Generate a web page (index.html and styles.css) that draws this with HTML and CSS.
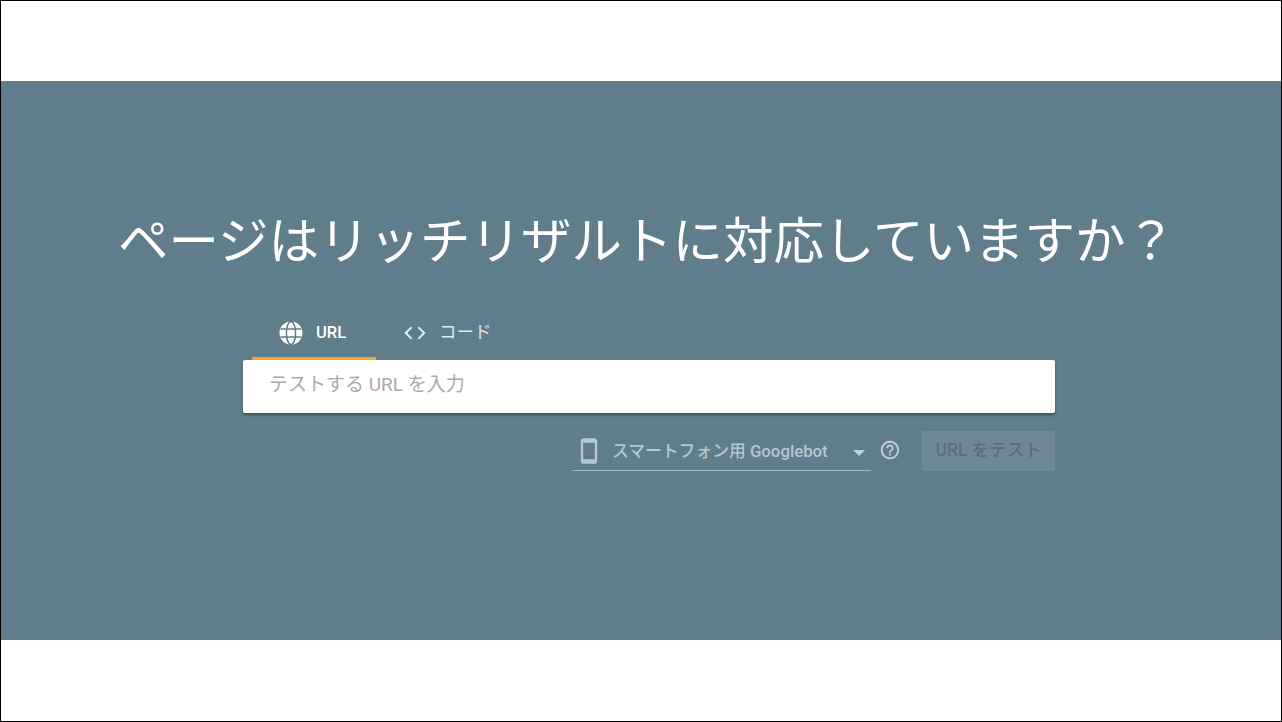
FILE: index.html
```html
<!DOCTYPE html>
<html lang="ja">
  <head>
    <meta charset="UTF-8" />
    <meta name="viewport" content="width=device-width, initial-scale=1.0" />
    <title>リッチリザルト テスト</title>
    <link rel="stylesheet" href="styles.css">
  </head>
  <body>
    <div class="frame">
      <main class="hero">
        <h1 class="title">ページはリッチリザルトに対応していますか？</h1>
        <div class="test-form">
          <div class="tabs">
            <div class="tab tab-active">
              <svg class="tab-icon" viewBox="0 0 24 24">
                <circle cx="12" cy="12" r="11.5" fill="#fff"/>
                <g fill="none" stroke="#607d8b" stroke-width="1.5">
                  <ellipse cx="12" cy="12" rx="4.6" ry="11.5"/>
                  <path d="M1.5 8h21M1.5 16h21"/>
                </g>
              </svg>
              <span>URL</span>
            </div>
            <div class="tab tab-code">
              <svg class="tab-icon" viewBox="0 0 24 24">
                <path fill="#e6ebed" d="M9.4 17.2 4.2 12l5.2-5.2L8 5.4 1.4 12 8 18.6l1.4-1.4zm5.2 0 5.2-5.2-5.2-5.2L16 5.4l6.6 6.6-6.6 6.6-1.4-1.4z"/>
              </svg>
              <span class="code-label">コード</span>
            </div>
          </div>
          <div class="url-input">テストする URL を入力</div>
          <div class="actions">
            <div class="agent-select">
              <svg class="phone-icon" viewBox="0 0 24 24">
                <path fill="#b8c7ce" d="M16.5 1h-9C5.84 1 5 1.9 5 3.5v17C5 22.1 5.84 23 7.5 23h9c1.66 0 2.5-.9 2.5-2.5v-17C19 1.9 18.16 1 16.5 1zM17 19H7V5h10v14z"/>
              </svg>
              <span class="agent-name">スマートフォン用 Googlebot</span>
              <span class="caret"></span>
            </div>
            <svg class="help-icon" viewBox="0 0 24 24">
              <path fill="#c5d1d7" d="M11 18h2v-2h-2v2zm1-16C6.48 2 2 6.48 2 12s4.48 10 10 10 10-4.48 10-10S17.52 2 12 2zm0 18c-4.41 0-8-3.59-8-8s3.59-8 8-8 8 3.59 8 8-3.59 8-8 8zm0-14c-2.21 0-4 1.79-4 4h2c0-1.1.9-2 2-2s2 .9 2 2c0 2-3 1.75-3 5h2c0-2.25 3-2.5 3-5 0-2.21-1.79-4-4-4z"/>
            </svg>
            <div class="test-button">URL をテスト</div>
          </div>
        </div>
      </main>
    </div>
  </body>
</html>
```

FILE: styles.css
```css
* {
  box-sizing: border-box;
  margin: 0;
  padding: 0;
}
body {
  background-color: white;
  font-family: Roboto, "Noto Sans CJK JP", sans-serif;
}
.frame {
  height: 722px;
  border: 1px solid black;
  padding: 80px 0 81px;
}
.hero {
  height: 559px;
  background-color: #607d8b;
  padding-top: 129px;
}
.title {
  color: white;
  font-size: 50.5px;
  font-weight: 400;
  line-height: 64px;
  text-align: center;
  white-space: nowrap;
  padding-left: 12px;
  margin-bottom: 40px;
}
.test-form {
  width: 812px;
  margin-left: 242px;
}
.tabs {
  display: flex;
  padding-left: 9px;
  height: 46px;
}
.tab {
  display: flex;
  align-items: center;
  height: 46px;
  padding-bottom: 9px;
  color: #dfe5e8;
  font-size: 17.5px;
}
.tab-active {
  width: 124px;
  gap: 13px;
  padding-left: 27px;
  color: white;
  font-size: 16.5px;
  font-weight: 500;
  border-bottom: 3px solid #f4a426;
  padding-bottom: 6px;
}
.tab-code {
  gap: 12px;
  padding-left: 27px;
}
.tab-icon {
  width: 24px;
  height: 24px;
}
.code-label {
  margin-bottom: 4px;
}
.url-input {
  height: 53px;
  background-color: white;
  border-radius: 2px;
  box-shadow: 0 2px 3px rgba(0, 0, 0, 0.35);
  color: #aaaaaa;
  font-size: 19px;
  line-height: 50px;
  padding-left: 26px;
}
.actions {
  display: flex;
  align-items: center;
  margin-top: 18px;
  padding-left: 329px;
}
.agent-select {
  display: flex;
  align-items: center;
  width: 300px;
  height: 40px;
  border-bottom: 1px solid #a3b6bf;
  padding-left: 3px;
  color: #b8c7ce;
  font-size: 16.8px;
}
.phone-icon {
  width: 28px;
  height: 28px;
}
.agent-name {
  margin-left: 9px;
  margin-bottom: 2px;
  font-weight: 500;
  white-space: nowrap;
}
.caret {
  margin-left: 25px;
  margin-top: 4px;
  border-left: 6px solid transparent;
  border-right: 6px solid transparent;
  border-top: 6px solid #c5d1d7;
}
.help-icon {
  width: 22px;
  height: 22px;
  margin: 0 21px 0 8px;
  position: relative;
  top: -1px;
}
.test-button {
  width: 133px;
  height: 40px;
  background-color: #6e8896;
  border-radius: 2px;
  color: #54707e;
  font-size: 17.5px;
  font-weight: 500;
  line-height: 39px;
  text-align: center;
  white-space: nowrap;
}
```
